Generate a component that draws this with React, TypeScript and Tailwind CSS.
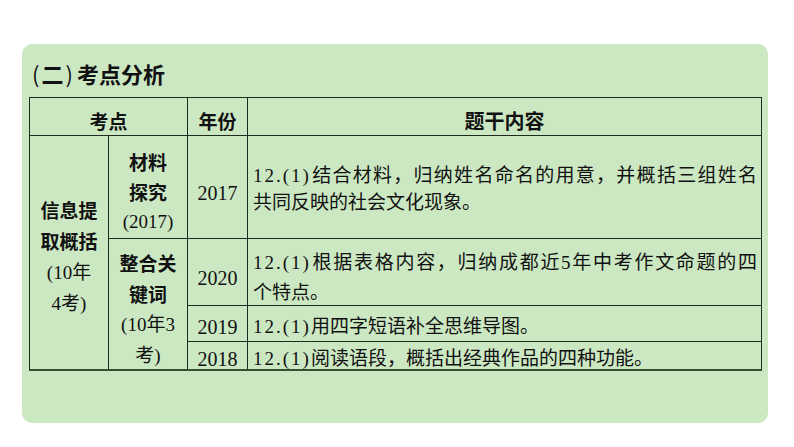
import React from 'react';

const sans = "font-['Noto_Sans_CJK_SC',sans-serif]";
const serif = "font-['Liberation_Serif','Noto_Sans_CJK_SC',serif]";

function Num({ children }: { children: React.ReactNode }) {
  // half-width digits in the source are wider than Liberation Serif's
  return <span className="tracking-[2px]">{children}</span>;
}

function FullLine({ children }: { children: React.ReactNode }) {
  return <span className="block text-justify [text-align-last:justify]">{children}</span>;
}

function App() {
  const cell = 'bg-[#cce8c3] flex';
  const label = `${sans} font-bold text-[19px] text-[#111]`;
  const body = `${serif} text-[19px] text-[#111]`;

  return (
    <div className="w-[794px] h-[447px] bg-white pt-[44px] pl-[22px]">
      <div className="w-[746px] h-[379px] bg-[#cce8c3] rounded-[10px] px-[7px]">
        {/* Title */}
        <div className={`h-[53px] flex items-center pl-[3px] pt-[5px] ${sans} font-bold text-[22px] text-[#111]`}>
          <span className="font-normal pr-[2px]">(</span>二<span className="font-normal pl-[2px] pr-[4px]">)</span>考点分析
        </div>

        {/* Table */}
        <div className="grid grid-cols-[78px_78px_59px_513px] grid-rows-[37px_102px_66px_35px_27px] gap-px bg-[#202b20] border border-[#202b20] border-b-2 border-b-[#34502f] w-[733px]">
          <div className={`${cell} col-span-2 items-center justify-center pt-[8px] leading-[20px] ${label}`}>考点</div>
          <div className={`${cell} items-center justify-center pt-[8px] leading-[20px] ${label}`}>年份</div>
          <div className={`${cell} items-center justify-center pt-[8px] leading-[20px] ${label} text-[20px]`}>题干内容</div>

          {/* 信息提取概括 */}
          <div className={`${cell} col-start-1 row-start-2 row-span-4 flex-col items-center justify-center pt-[8px] leading-[31.5px] text-center`}>
            <span className={label}>信息提</span>
            <span className={label}>取概括</span>
            <span className={body}>(10年</span>
            <span className={body}>4考)</span>
          </div>

          {/* 材料探究 */}
          <div className={`${cell} col-start-2 row-start-2 flex-col items-center justify-center pt-[10px] leading-[30px] text-center`}>
            <span className={label}>材料</span>
            <span className={label}>探究</span>
            <span className={body}>(2017)</span>
          </div>
          <div className={`${cell} col-start-3 row-start-2 items-center justify-center pt-[11px] leading-[20px] ${body} text-[20px]`}>2017</div>
          <div className={`${cell} col-start-4 row-start-2 flex-col justify-center pt-[4px] pl-[5px] pr-[4px] leading-[27px] ${body}`}>
            <FullLine>
              <Num>12.(1)</Num>结合材料，归纳姓名命名的用意，并概括三组姓名
            </FullLine>
            <span className="block">共同反映的社会文化现象。</span>
          </div>

          {/* 整合关键词 */}
          <div className={`${cell} col-start-2 row-start-3 row-span-3 flex-col items-center justify-center pt-[10px] leading-[31px] text-center`}>
            <span className={label}>整合关</span>
            <span className={label}>键词</span>
            <span className={body}>(10年3</span>
            <span className={body}>考)</span>
          </div>
          <div className={`${cell} col-start-3 row-start-3 items-center justify-center pt-[11px] leading-[20px] ${body} text-[20px]`}>2020</div>
          <div className={`${cell} col-start-4 row-start-3 flex-col justify-center pt-[11px] pl-[5px] pr-[4px] leading-[30px] ${body}`}>
            <FullLine>
              <Num>12.(1)</Num>根据表格内容，归纳成都近5年中考作文命题的四
            </FullLine>
            <span className="block">个特点。</span>
          </div>

          <div className={`${cell} col-start-3 row-start-4 items-center justify-center pt-[6px] leading-[20px] ${body} text-[20px]`}>2019</div>
          <div className={`${cell} col-start-4 row-start-4 items-center pt-[6px] pl-[5px] leading-[20px] ${body}`}>
            <span>
              <Num>12.(1)</Num>用四字短语补全思维导图。
            </span>
          </div>

          <div className={`${cell} col-start-3 row-start-5 items-center justify-center pt-[7px] leading-[20px] ${body} text-[20px]`}>2018</div>
          <div className={`${cell} col-start-4 row-start-5 items-center pt-[7px] pl-[5px] leading-[20px] ${body}`}>
            <span>
              <Num>12.(1)</Num>阅读语段，概括出经典作品的四种功能。
            </span>
          </div>
        </div>
      </div>
    </div>
  );
}

export default App;
